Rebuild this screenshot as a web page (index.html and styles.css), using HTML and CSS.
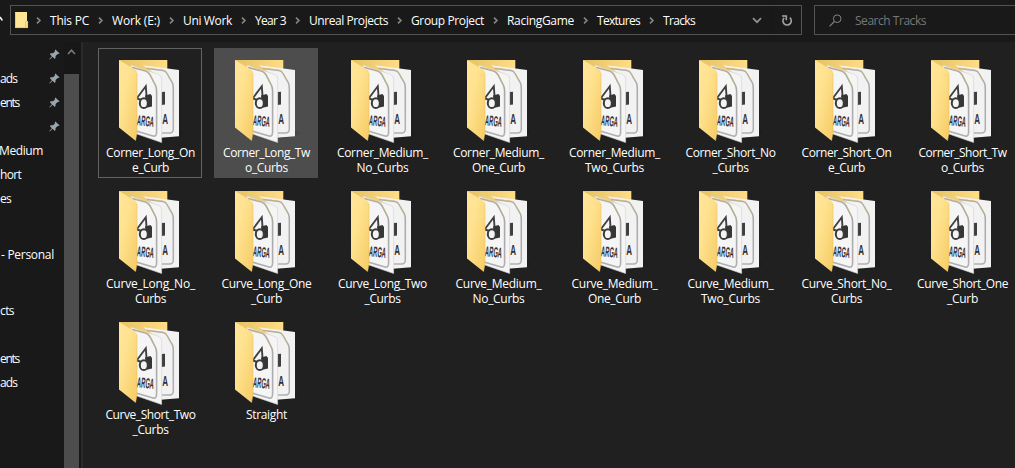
FILE: index.html
```html
<!DOCTYPE html>
<html lang="en">
<head>
<meta charset="utf-8">
<title>Tracks</title>
<link rel="stylesheet" href="styles.css">
</head>
<body>
<svg class="defs" width="0" height="0" aria-hidden="true">
  <defs>
    <linearGradient id="flap" x1="0" y1="0" x2="1" y2="1"><stop offset="0" stop-color="#ffe59a"/><stop offset=".35" stop-color="#ffe391"/><stop offset="1" stop-color="#f6cb64"/></linearGradient>
    <linearGradient id="back" x1="0" y1="0" x2="1" y2="0"><stop offset="0" stop-color="#e6c263"/><stop offset="1" stop-color="#ffdc86"/></linearGradient>
    <linearGradient id="edge" x1="0" y1="0" x2="0" y2="1"><stop offset="0" stop-color="#b3ad9e"/><stop offset=".3" stop-color="#a8a8a8"/><stop offset="1" stop-color="#b0b0b0"/></linearGradient>
    <linearGradient id="shade" x1="0" y1="0" x2="1" y2="0"><stop offset="0" stop-color="#000" stop-opacity=".4"/><stop offset="1" stop-color="#000" stop-opacity="0"/></linearGradient>
    <symbol id="folder" viewBox="0 0 75 95">
      <path d="M48 85L67 82L74 79L67 76Z" fill="url(#shade)"/>
      <path d="M7 6H55.3V30H20Z" fill="url(#back)"/>
      <path d="M31 11.2L67 16V82.3L46 84V22Z" fill="#f2f2f2"/>
      <path d="M35 14.4L51 16.6Q53.6 17 55 19.5L60.5 29Q61.3 31 61.3 34V75Q61.3 79 57.5 79H50" fill="none" stroke="url(#edge)" stroke-width="1.5"/>
      <path d="M33 13.8L51 16M54.5 18.5L60.3 28.5" stroke="#d7b970" stroke-width=".5"/>
      <path d="M49.5 38L53 37.7V50.5L49.5 51Z" fill="#3e3e3e"/>
      <text x="50.2" y="70" class="stamp" textLength="5.8" lengthAdjust="spacingAndGlyphs">A</text>
      <path d="M19 11L46 20.2Q49.6 21.5 49.6 24V88.5L22 79Z" fill="#f5f5f5" stroke="#d2d2d2" stroke-width=".6"/>
      <path d="M20 13.5L33.5 17Q36.3 17.8 37.8 20.5L43.5 31.5Q44.6 34 44.6 37V78Q44.6 83 41 82L24 77" fill="none" stroke="url(#edge)" stroke-width="1.6"/>
      <path d="M21 13L34 16.7M39 21.5L44.3 32.5" stroke="#d6b968" stroke-width=".5"/>
      <path d="M25 44L33.8 32.3L34.6 43" fill="none" stroke="#404040" stroke-width="1.9"/>
      <path d="M24.5 44.3L30 46.3" stroke="#404040" stroke-width="2.2"/>
      <path d="M33 41.5L38.5 40L40 42V52.5L34.5 53.8Z" fill="#363636"/>
      <ellipse cx="31.8" cy="49.2" rx="4" ry="4.9" fill="#f3f3f3" stroke="#3a3a3a" stroke-width="2"/>
      <text x="24.6" y="71.2" class="stamp" transform="rotate(6 24.6 71.2)" textLength="17" lengthAdjust="spacingAndGlyphs">ARGA</text>
      <path d="M7 6L23.5 16Q25.1 17 25.1 19V79L23.6 86.8L7 73.5Z" fill="url(#flap)"/>
      <path d="M25 19V79L23.6 86.8" fill="none" stroke="#dfb95a" stroke-width=".4"/>
    </symbol>
    <symbol id="sep" viewBox="0 0 6 9"><path d="M1 1.6L3.9 4.5L1 7.4" fill="none" stroke="#858585" stroke-width="1.7"/></symbol>
    <symbol id="pin" viewBox="0 0 11 11"><path d="M6.4 .4L10.6 4.5L9.4 5.1L8.7 4.9L6.6 7.1L6.5 9.3L5.6 9.8L3.5 7.8L.9 10.5L.4 10.1L2.9 7.2L.9 5.2L1.7 4.2L4 4.2L6.1 2.2L5.8 1.2Z" fill="#9aa6ae"/></symbol>
  </defs>
</svg>
<div class="window">
  <header class="toolbar">
    <svg class="up" width="3" height="8" viewBox="0 0 3 8"><path d="M0 1L2.4 4.5" stroke="#eee" stroke-width="1.6"/></svg>
    <div class="address">
      <svg class="mini" width="14" height="17" viewBox="0 0 14 17"><path d="M0 0H12V9H13V16H0Z" fill="#ffe694"/><path d="M.4 .5V15.6H12.6V9.5H10.6V15" fill="none" stroke="#efc54d" stroke-width=".9"/></svg>
      <nav class="crumbs" id="crumbs"></nav>
      <svg class="drop" width="10" height="7" viewBox="0 0 10 7"><path d="M1 1.2L5 5.2L9 1.2" fill="none" stroke="#909090" stroke-width="1.7"/></svg>
      <div class="refresh"><svg width="12" height="13" viewBox="0 0 12 13"><path d="M8.8 3.6A4.2 4.2 0 1 1 3.2 3.8M1 2H5.3V6.2" fill="none" stroke="#a2a2a2" stroke-width="1.6"/></svg></div>
    </div>
    <div class="search">
      <svg width="13" height="13" viewBox="0 0 13 13"><circle cx="8.2" cy="4.7" r="3.8" fill="none" stroke="#858585"/><path d="M5.4 7.5L.5 12.4" stroke="#858585" stroke-width="1.1"/></svg>
      <span data-w="71">Search Tracks</span>
    </div>
  </header>
  <main class="body">
    <aside class="tree" id="tree"></aside>
    <div class="scroll">
      <svg width="9" height="6" viewBox="0 0 9 6"><path d="M1 5L4.5 1.2L8 5" fill="none" stroke="#7b7b7b" stroke-width="1.6"/></svg>
      <div class="thumb"></div>
    </div>
    <section class="files" id="files"></section>
  </main>
</div>
<script src="app.js"></script>
</body>
</html>
```
FILE: styles.css
```css
body { margin: 0; background: #191919; color: #fff; font: 12px/15px "Open Sans", "Noto Sans", sans-serif; }
.defs { position: absolute; }
.window { width: 1015px; height: 468px; overflow: hidden; display: flex; flex-direction: column; }
.toolbar { height: 42px; display: flex; box-sizing: border-box; padding-top: 5px; flex: none; }
.up { width: 3px; margin: 11px 7px 0 0; flex: none; }
.address { width: 792px; height: 30px; box-sizing: border-box; border: 1px solid #535353; display: flex; align-items: center; flex: none; }
.mini { margin: 0 -2px 0 4px; flex: none; }
.crumbs { display: flex; width: 714px; }
.crumb { display: flex; align-items: center; white-space: nowrap; }
.crumb svg { width: 6px; height: 9px; margin: 1px 8px 0 9px; flex: none; }
.drop { margin: 1px 0 0 11px; flex: none; }
.refresh { display: flex; align-items: center; justify-content: center; height: 28px; width: 28px; margin-left: 10px; border-left: 1px solid #161616; }
.search { margin-left: 12px; width: 230px; height: 30px; box-sizing: border-box; border: 1px solid #535353; display: flex; align-items: center; flex: none; padding-left: 14px; color: #777; }
.search svg { margin-right: 13px; flex: none; }
[data-w] { display: block; white-space: nowrap; flex: none; }
.body { flex: 1; display: flex; min-height: 0; }
.tree { width: 64px; flex: none; overflow: hidden; }
.row { height: 24px; display: flex; align-items: center; }
.row.gap { height: 32px; }
.row .name { flex: none; }
.row .name.cut1 { margin-left: -1px; }
.row .name.indent { margin-left: 1px; }
.row svg { width: 11px; height: 11px; margin: 1px 4px 0 auto; }
.scroll { width: 17px; flex: none; display: flex; flex-direction: column; background: #171717; align-items: flex-start; }
.scroll svg { margin: 7px 0 19px 3px; flex: none; }
.thumb { width: 15px; flex: 1; background: #4d4d4d; }
.files { flex: 1; border-left: 2px solid #2b2b2b; background: #202020; display: grid; grid-template-columns: repeat(8, 104px); grid-auto-rows: 130px; gap: 1px 12px; padding: 6px 0 0 15px; align-content: start; }
.tile { box-sizing: border-box; border: 1px solid transparent; padding: 5px 0 0 1px; display: flex; flex-direction: column; align-items: center; }
.tile svg { width: 75px; height: 95px; margin: 0 0 -4px -2px; flex: none; }
.tile.focused { border-color: #626262; }
.tile.hover { background: #4d4d4d; }
.stamp { font: bold 14.5px "Liberation Sans", sans-serif; fill: #303030; }
```
FILE: app.js
```javascript
const icon = id => `<svg><use href="#${id}"/></svg>`;
const label = (text, width) => `<span data-w="${width}">${text}</span>`;

const crumbs = [["This PC", 39], ["Work (E:)", 48], ["Uni Work", 49], ["Year 3", 31], ["Unreal Projects", 79], ["Group Project", 73], ["RacingGame", 67], ["Textures", 43], ["Tracks", 32]];
document.getElementById("crumbs").innerHTML = crumbs.map(c => `<span class="crumb">${icon("sep")}${label(...c)}</span>`).join("");

const rows = [
  { pin: true }, { text: "ads", width: 17, pin: true }, { text: "ents", width: 19, pin: true }, { pin: true },
  { text: "Medium", width: 44, shift: "cut1" }, { text: "hort", width: 21 }, { text: "es", width: 11 }, { gap: true },
  { text: "- Personal", width: 53, shift: "indent" }, { gap: true }, { text: "cts", width: 14 }, {},
  { text: "ents", width: 19 }, { text: "ads", width: 17 }
];
document.getElementById("tree").innerHTML = rows.map(r =>
  `<div class="row${r.gap ? " gap" : ""}">${r.text ? `<div class="name ${r.shift || ""}">${label(r.text, r.width)}</div>` : ""}${r.pin ? icon("pin") : ""}</div>`).join("");

const files = [
  ["Corner_Long_On", 89, "e_Curb", 37], ["Corner_Long_Tw", 87, "o_Curbs", 43], ["Corner_Medium_", 91, "No_Curbs", 52], ["Corner_Medium_", 91, "One_Curb", 53],
  ["Corner_Medium_", 91, "Two_Curbs", 59], ["Corner_Short_No", 90, "_Curbs", 36], ["Corner_Short_On", 90, "e_Curb", 37], ["Corner_Short_Tw", 88, "o_Curbs", 43],
  ["Curve_Long_No_", 89, "Curbs", 31], ["Curve_Long_One", 90, "_Curb", 31], ["Curve_Long_Two", 89, "_Curbs", 36], ["Curve_Medium_", 86, "No_Curbs", 52],
  ["Curve_Medium_", 86, "One_Curb", 53], ["Curve_Medium_", 86, "Two_Curbs", 59], ["Curve_Short_No_", 90, "Curbs", 31], ["Curve_Short_One", 91, "_Curb", 31],
  ["Curve_Short_Two", 90, "_Curbs", 36], ["Straight", 41]
];
document.getElementById("files").innerHTML = files.map(([a, aw, b, bw], i) =>
  `<div class="tile${[" focused", " hover"][i] || ""}">${icon("folder")}${label(a, aw)}${b ? label(b, bw) : ""}</div>`).join("");

document.querySelectorAll("[data-w]").forEach(el => {
  const range = document.createRange();
  range.selectNodeContents(el);
  const natural = range.getBoundingClientRect().width;
  const width = Number(el.dataset.w);
  el.style.letterSpacing = (width - natural) / el.textContent.length + "px";
  el.style.width = width + "px";
});
```
